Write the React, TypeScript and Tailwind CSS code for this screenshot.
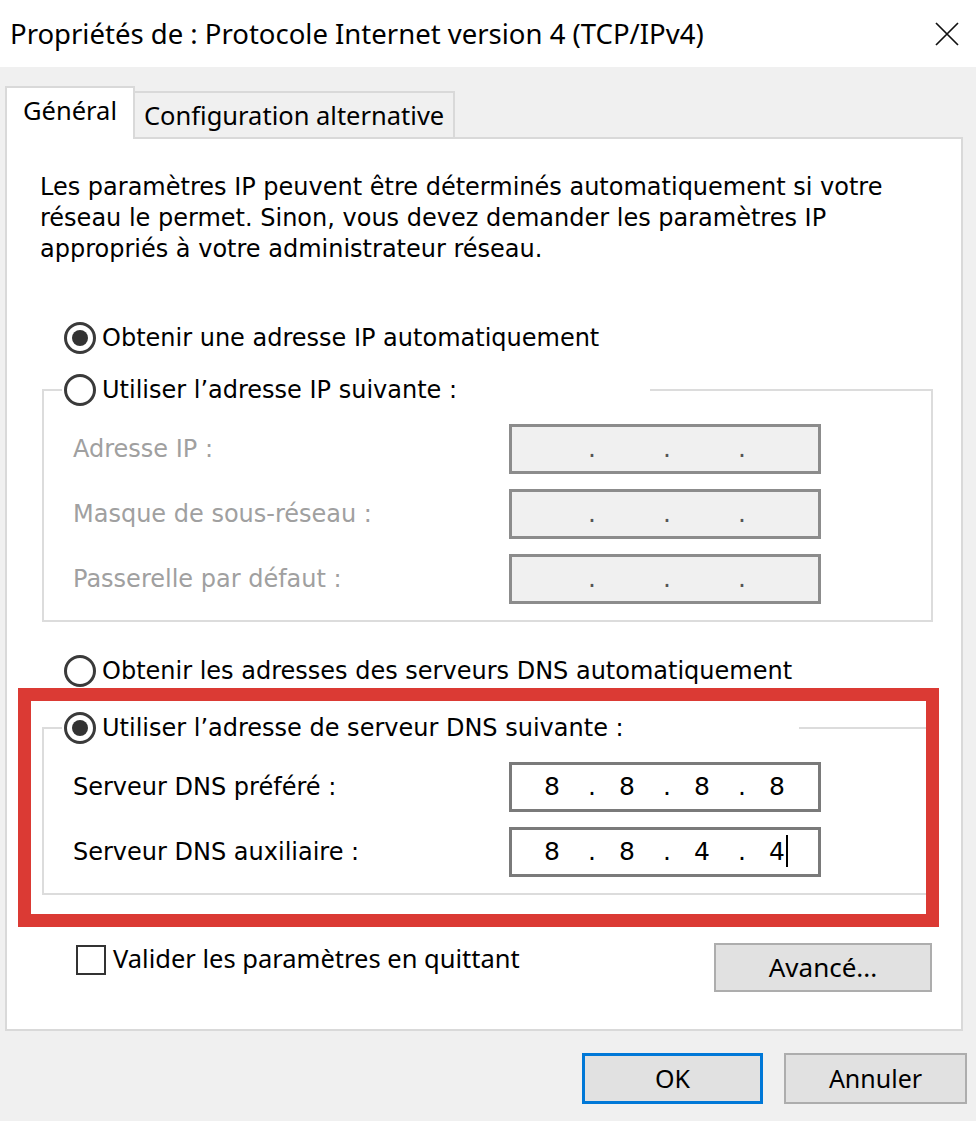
import { ReactNode } from "react";

const ui = "font-['Noto_Sans',sans-serif]";
const dlg = "font-['DejaVu_Sans',sans-serif]";

function Radio({ checked }: { checked?: boolean }) {
  return (
    <span className="flex h-[32px] w-[32px] shrink-0 items-center justify-center rounded-full border-[3px] border-[#3a3a3a] bg-white">
      {checked && <span className="h-[16px] w-[16px] rounded-full bg-[#333]" />}
    </span>
  );
}

function RadioRow({ checked, children }: { checked?: boolean; children: ReactNode }) {
  return (
    <div className="flex h-[34px] items-center gap-[6px] whitespace-nowrap pl-[2px] text-[24px] text-black">
      <Radio checked={checked} />
      <span>{children}</span>
    </div>
  );
}

function IpField({ values, disabled, caret }: { values: string[]; disabled?: boolean; caret?: boolean }) {
  return (
    <div
      className={`flex h-[50px] w-[312px] items-center border-[3px] pl-[20px] text-[25px] ${
        disabled ? "border-[#8c8c8c] bg-[#f0f0f0] text-[#555]" : "border-[#7a7a7a] bg-white text-black"
      }`}
    >
      {values.map((v, i) => (
        <div key={i} className="flex">
          <span className="relative w-[40px] text-center">
            {v || "\u00a0"}
            {caret && i === 3 && (
              <span className="absolute left-[29px] top-[2px] h-[32px] w-[2px] bg-black" />
            )}
          </span>
          {i < 3 && <span className="w-[35px] pl-[5px] text-center">.</span>}
        </div>
      ))}
    </div>
  );
}

function FieldRow({ label, disabled, children }: { label: string; disabled?: boolean; children: ReactNode }) {
  return (
    <div className="flex h-[50px] items-center">
      <span className={`w-[436px] whitespace-nowrap text-[24px] ${disabled ? "text-[#a0a0a0]" : "text-black"}`}>
        {label}
      </span>
      {children}
    </div>
  );
}

function GroupBox({ legendWidth, legend, checked, children }: {
  legendWidth: string;
  legend: string;
  checked?: boolean;
  children: ReactNode;
}) {
  return (
    <fieldset className="ml-[35px] w-[891px] border-2 border-[#dcdcdc]">
      <legend className={`ml-[18px] ${legendWidth}`}>
        <RadioRow checked={checked}>{legend}</RadioRow>
      </legend>
      <div className="flex flex-col gap-[15px] pb-[16px] pl-[29px] pt-[17px]">{children}</div>
    </fieldset>
  );
}

export default function App() {
  const empty = ["", "", "", ""];

  return (
    <div className={`h-[1121px] w-[976px] bg-[#f0f0f0] ${dlg}`}>
      <div className="flex h-[67px] items-center justify-between bg-white pl-[10px] pr-[17px]">
        <span className={`whitespace-nowrap text-[27.5px] text-black ${ui}`}>
          Propriétés de : Protocole Internet version 4 (TCP/IPv4)
        </span>
        <svg width="24" height="24" viewBox="0 0 24 24" className="text-[#111]">
          <path d="M1 1 L23 23 M23 1 L1 23" stroke="currentColor" strokeWidth="1.7" fill="none" />
        </svg>
      </div>

      <div className="pl-[5px] pt-[19px]">
        <div className={`flex items-end text-[25.5px] text-black ${ui}`}>
          <div className="relative z-10 -mb-[2px] flex h-[53px] w-[130px] items-start border-x-2 border-t-2 border-[#d9d9d9] bg-white pl-[16px] pt-[3px]">
            Général
          </div>
          <div className="flex h-[46px] w-[320px] items-center border-r-2 border-t-2 border-[#d9d9d9] bg-[#f0f0f0] pl-[9px]">
            Configuration alternative
          </div>
        </div>

        <div className="relative h-[894px] w-[958px] border-2 border-[#d9d9d9] bg-white">
          <p className="whitespace-nowrap pl-[33px] pt-[33px] text-[24px] leading-[31px] text-black">
            Les paramètres IP peuvent être déterminés automatiquement si votre
            <br />
            réseau le permet. Sinon, vous devez demander les paramètres IP
            <br />
            appropriés à votre administrateur réseau.
          </p>

          <div className="ml-[55px] mt-[56px]">
            <RadioRow checked>Obtenir une adresse IP automatiquement</RadioRow>
          </div>

          <div className="mt-[18px]">
            <GroupBox legendWidth="w-[588px]" legend="Utiliser l’adresse IP suivante :">
              <FieldRow label="Adresse IP :" disabled>
                <IpField values={empty} disabled />
              </FieldRow>
              <FieldRow label="Masque de sous-réseau :" disabled>
                <IpField values={empty} disabled />
              </FieldRow>
              <FieldRow label="Passerelle par défaut :" disabled>
                <IpField values={empty} disabled />
              </FieldRow>
            </GroupBox>
          </div>

          <div className="ml-[55px] mt-[32px]">
            <RadioRow>Obtenir les adresses des serveurs DNS automatiquement</RadioRow>
          </div>

          <div className="mt-[23px]">
            <GroupBox legendWidth="w-[737px]" legend="Utiliser l’adresse de serveur DNS suivante :" checked>
              <FieldRow label="Serveur DNS préféré :">
                <IpField values={["8", "8", "8", "8"]} />
              </FieldRow>
              <FieldRow label="Serveur DNS auxiliaire :">
                <IpField values={["8", "8", "4", "4"]} caret />
              </FieldRow>
            </GroupBox>
          </div>

          <div className="mt-[48px] flex items-start justify-between pl-[69px] pr-[29px]">
            <div className={`flex items-center gap-[7px] text-[25.5px] text-black ${ui}`}>
              <span className="h-[30px] w-[30px] border-2 border-[#333] bg-white" />
              <span className="-mt-[4px] whitespace-nowrap">Valider les paramètres en quittant</span>
            </div>
            <div className={`flex h-[49px] w-[218px] items-center justify-center border-2 border-[#adadad] bg-[#e1e1e1] text-[26px] text-black ${ui}`}>
              Avancé...
            </div>
          </div>

          {/* annotation frame drawn over the DNS section */}
          <div className="pointer-events-none absolute left-[11px] top-[549px] h-[239px] w-[921px] border-[13px] border-[#db3a34]" />
        </div>

        <div className={`mt-[22px] flex justify-end gap-[21px] pr-[9px] text-[25px] text-black ${ui}`}>
          <div className="flex h-[51px] w-[181px] items-center justify-center border-[3px] border-[#0078d7] bg-[#e1e1e1]">
            OK
          </div>
          <div className="flex h-[51px] w-[183px] items-center justify-center border-2 border-[#adadad] bg-[#e1e1e1]">
            Annuler
          </div>
        </div>
      </div>
    </div>
  );
}
